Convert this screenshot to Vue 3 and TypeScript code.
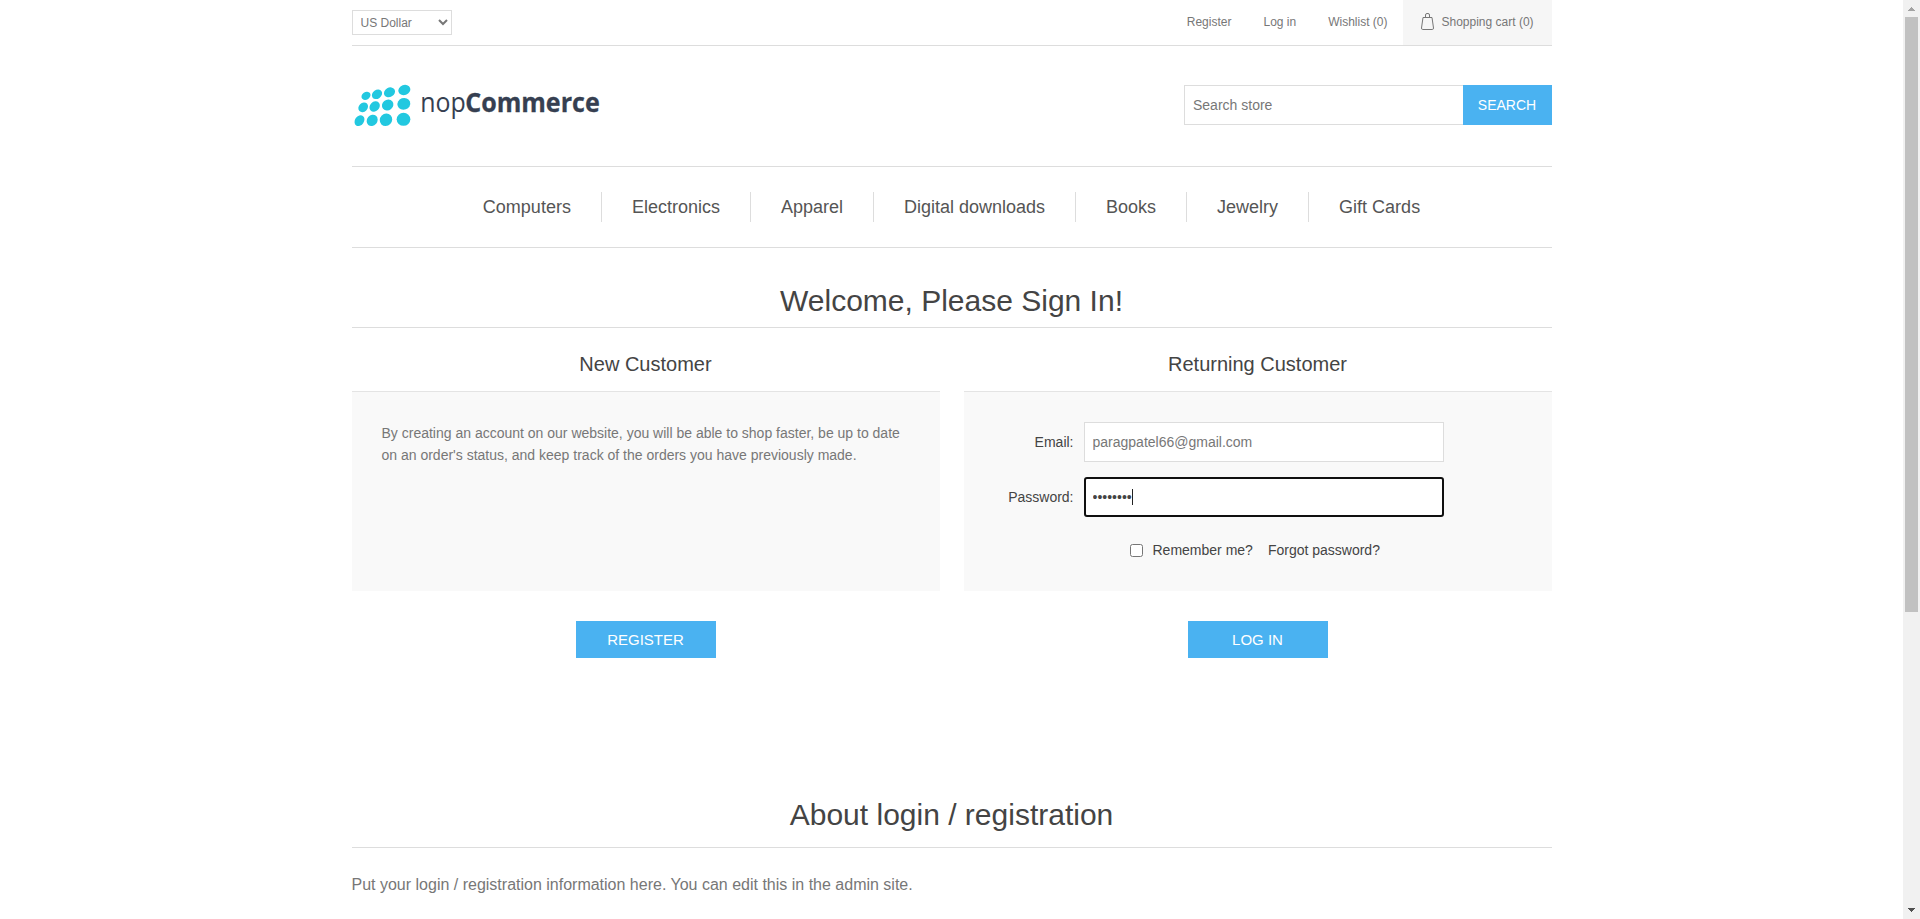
<script setup lang="ts">
import { ref } from 'vue'

interface Dot {
  cx: number
  cy: number
  rx: number
  ry: number
}

const currency = ref('US Dollar')
const email = ref('paragpatel66@gmail.com')
const password = ref('password')
const remember = ref(false)

const headerLinks: string[] = ['Register', 'Log in', 'Wishlist (0)']
const categories: string[] = [
  'Computers',
  'Electronics',
  'Apparel',
  'Digital downloads',
  'Books',
  'Jewelry',
  'Gift Cards',
]

const logoDots: Dot[] = [
  { cx: 48, cy: 47.5, rx: 14.5, ry: 11.5 },
  { cx: 81, cy: 43, rx: 16.5, ry: 13 },
  { cx: 118.5, cy: 37, rx: 17.5, ry: 14 },
  { cx: 163, cy: 30, rx: 18.5, ry: 15 },
  { cx: 39.5, cy: 82, rx: 16, ry: 13 },
  { cx: 74, cy: 79.5, rx: 17, ry: 14 },
  { cx: 113, cy: 75, rx: 18, ry: 16 },
  { cx: 161.5, cy: 71.5, rx: 19.5, ry: 17.5 },
  { cx: 28.5, cy: 122, rx: 17.5, ry: 13.5 },
  { cx: 66.5, cy: 121, rx: 18, ry: 15.5 },
  { cx: 108, cy: 119.5, rx: 19.5, ry: 18 },
  { cx: 160.5, cy: 118, rx: 20.5, ry: 19.5 },
]
const tilts: number[] = [-35, -35, -30, -20, -45, -45, -40, -20, -55, -50, -45, 0]
</script>

<template>
  <div class="window">
    <div class="page">
      <div class="wrapper">
        <header>
          <div class="header-upper">
            <select v-model="currency" class="currency">
              <option>US Dollar</option>
              <option>Euro</option>
            </select>
            <nav class="header-links">
              <a v-for="link in headerLinks" :key="link">{{ link }}</a>
              <a class="cart">
                <svg class="bag" width="13" height="17" viewBox="0 0 13 17">
                  <path
                    d="M2 4.5H11L12.5 15Q12.5 16.5 11.3 16.5H1.7Q0.5 16.5 0.5 15ZM4.5 4.5V2Q4.5 .5 6 .5H7Q8.5 .5 8.5 2V4.5"
                    fill="none"
                    stroke="#777"
                  />
                </svg>
                <span>Shopping cart (0)</span>
              </a>
            </nav>
          </div>
          <div class="header-lower">
            <svg class="logo" width="260" height="60" viewBox="0 0 260 60">
              <g fill="#22c8e0" transform="scale(.33333)">
                <ellipse
                  v-for="(d, i) in logoDots"
                  :key="i"
                  v-bind="d"
                  :transform="`rotate(${tilts[i]} ${d.cx} ${d.cy})`"
                />
              </g>
              <text class="logo-light" x="70.2" y="32.3" textLength="45.5" lengthAdjust="spacingAndGlyphs">nop</text>
              <text class="logo-bold" x="115.2" y="32.3" textLength="134.5" lengthAdjust="spacingAndGlyphs">Commerce</text>
            </svg>
            <form class="search" @submit.prevent>
              <input type="text" placeholder="Search store" />
              <button type="submit">SEARCH</button>
            </form>
          </div>
        </header>

        <ul class="menu">
          <li v-for="c in categories" :key="c"><a>{{ c }}</a></li>
        </ul>

        <h1 class="title">Welcome, Please Sign In!</h1>

        <div class="columns">
          <section>
            <h2>New Customer</h2>
            <div class="panel intro">
              By creating an account on our website, you will be able to shop faster, be up to date on an
              order's status, and keep track of the orders you have previously made.
            </div>
            <button class="action">REGISTER</button>
          </section>
          <section>
            <h2>Returning Customer</h2>
            <div class="panel form">
              <div class="field">
                <label>Email:</label>
                <input v-model="email" type="text" />
              </div>
              <div class="field">
                <label>Password:</label>
                <div class="focused">
                  <input v-model="password" type="password" />
                  <span class="caret"></span>
                </div>
              </div>
              <div class="options">
                <input id="remember" v-model="remember" type="checkbox" />
                <label for="remember">Remember me?</label>
                <a>Forgot password?</a>
              </div>
            </div>
            <button class="action">LOG IN</button>
          </section>
        </div>

        <h1 class="title about">About login / registration</h1>
        <p class="info">Put your login / registration information here. You can edit this in the admin site.</p>
      </div>
    </div>

    <div class="scrollbar">
      <svg width="17" height="17" viewBox="0 0 17 17" shape-rendering="crispEdges">
        <path d="M8 7h1v1h1v1h1v1h1v1H5v-1h1V9h1V8h1z" fill="#a3a3a3" />
      </svg>
      <div class="thumb"></div>
      <svg class="down" width="17" height="17" viewBox="0 0 17 17" shape-rendering="crispEdges">
        <path d="M5 6h7v1h-1v1h-1v1H9v1H8V9H7V8H6V7H5z" fill="#505050" />
      </svg>
    </div>
  </div>
</template>

<style>
body {
  margin: 0;
  overflow: hidden;
}
</style>

<style scoped>
* {
  box-sizing: border-box;
}
.window {
  display: flex;
  width: 100%;
  height: 919px;
  overflow: hidden;
  background: #fff;
  color: #777;
  font: 14px "Liberation Sans", Arial, sans-serif;
}
.page {
  flex: 1;
}
.wrapper {
  width: 1200px;
  margin: 0 auto;
}
input,
select,
button {
  font-family: inherit;
  color: #777;
}
.header-upper {
  display: flex;
  justify-content: space-between;
  height: 46px;
  border-bottom: 1px solid #ddd;
}
.currency {
  width: 100px;
  height: 25px;
  margin-top: 10px;
  padding: 0 0 0 4px;
  border: 1px solid #ddd;
  border-radius: 0;
  background-color: #fff;
  font-size: 12px;
}
.header-links {
  display: flex;
  font-size: 12px;
  line-height: 44px;
}
.header-links a {
  margin-right: 32px;
}
.header-links a:nth-child(3) {
  margin-right: 15px;
}
.header-links .cart {
  display: flex;
  width: 149px;
  height: 45px;
  margin: 0;
  padding-left: 18px;
  background: #f6f6f6;
}
.bag {
  margin: 13px 8px 0 0;
}
.header-lower {
  display: flex;
  justify-content: space-between;
  height: 121px;
  padding-top: 39px;
  border-bottom: 1px solid #ddd;
}
.logo {
  margin: -5px 0 0 -2px;
}
.logo text {
  font-family: "Open Sans", "Noto Sans", sans-serif;
  font-size: 27px;
  fill: #363f51;
}
.logo .logo-bold {
  font-weight: 700;
  stroke: #363f51;
  stroke-width: 0.3px;
}
.search {
  display: flex;
  height: 40px;
}
.search input {
  width: 279px;
  padding: 0 8px 0 8.5px;
  border: 1px solid #ddd;
  border-right: 0;
  font-size: 14px;
}
.search input::placeholder {
  color: #777;
}
.search button {
  width: 89px;
  padding: 0;
  border: 0;
  background: #4ab2f1;
  color: #fff;
  font-size: 14px;
}
.menu {
  display: flex;
  justify-content: center;
  height: 81px;
  margin: 0;
  padding: 25px 0 0;
  border-bottom: 1px solid #ddd;
  list-style: none;
  color: #555;
  font-size: 18px;
  line-height: 30px;
}
.menu li {
  height: 30px;
  padding: 0 30px;
}
.menu li + li {
  border-left: 1px solid #ddd;
}
.title {
  height: 80px;
  margin: 0;
  padding-top: 35px;
  border-bottom: 1px solid #ddd;
  color: #444;
  font-size: 30px;
  font-weight: 400;
  line-height: 36px;
  text-align: center;
}
.columns {
  display: flex;
  justify-content: space-between;
}
.columns section {
  width: 588px;
}
.columns h2 {
  height: 63px;
  margin: 0;
  padding-top: 24px;
  color: #444;
  font-size: 20px;
  font-weight: 400;
  line-height: 24px;
  text-align: center;
}
.panel {
  height: 200px;
  border-top: 1px solid #e4e4e4;
  background: #f9f9f9;
}
.intro {
  padding: 30px;
  line-height: 22px;
}
.form {
  padding-top: 30px;
  color: #444;
}
.field {
  display: flex;
  align-items: center;
  height: 40px;
  margin-bottom: 15px;
}
.field label {
  width: 110px;
  margin-right: 10px;
  text-align: right;
}
.field input {
  width: 360px;
  height: 40px;
  padding: 0 8px;
  border: 1px solid #ddd;
  background: #fff;
  font-size: 14px;
}
.focused {
  position: relative;
  height: 40px;
}
.focused input {
  border: 2px solid #101010;
  border-radius: 3px;
  padding: 0 7px;
  outline: none;
  color: #444;
}
.caret {
  position: absolute;
  top: 12px;
  left: 48px;
  width: 1px;
  height: 16px;
  background: #222;
}
.options {
  display: flex;
  align-items: center;
  margin-top: 25px;
  padding-left: 166px;
}
.options input {
  width: 13px;
  height: 13px;
  margin: 0 10px 0 0;
}
.options label {
  margin-right: 15px;
}
.action {
  display: block;
  width: 140px;
  height: 37px;
  margin: 30px auto 0;
  padding: 0;
  border: 0;
  background: #4ab2f1;
  color: #fff;
  font-size: 15px;
}
.about {
  margin-top: 104px;
  height: 86px;
}
.info {
  margin: 24px 0 0;
  font-size: 16px;
  line-height: 26px;
}
.scrollbar {
  display: flex;
  flex-direction: column;
  width: 17px;
  background: #f1f1f1;
}
.thumb {
  width: 13px;
  height: 595px;
  margin-left: 2px;
  background: #c1c1c1;
}
.down {
  margin-top: auto;
}
</style>
